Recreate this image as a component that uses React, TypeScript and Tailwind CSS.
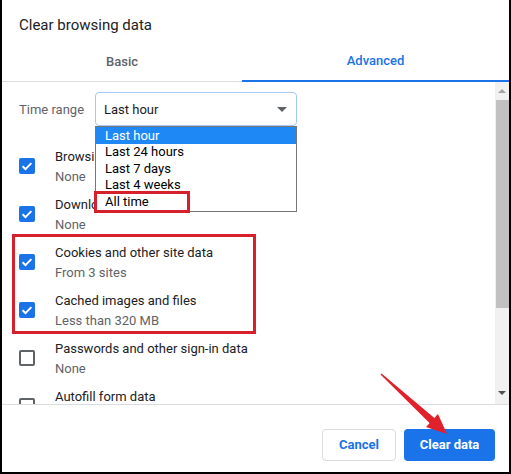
import React from "react";

function Checked() {
  return (
    <div className="w-[16px] h-[16px] rounded-[2px] bg-[#1a73e8] flex items-center justify-center shrink-0">
      <svg width="16" height="16" viewBox="0 0 16 16">
        <path d="M3.6 8.2l2.9 2.9 5.9-6" fill="none" stroke="white" strokeWidth="2" />
      </svg>
    </div>
  );
}

function Unchecked() {
  return <div className="w-[16px] h-[16px] rounded-[2px] border-2 border-[#5f6368] shrink-0" />;
}

function Row({ checked, title, sub }: { checked: boolean; title: string; sub: string }) {
  return (
    <div className="h-[48px] flex items-center shrink-0">
      {checked ? <Checked /> : <Unchecked />}
      <div className="ml-[20px] pt-[1px] flex flex-col">
        <div className="text-[13px] leading-[20px] text-[#202124] whitespace-nowrap">{title}</div>
        <div className="text-[13px] leading-[20px] text-[#5f6368] whitespace-nowrap">{sub}</div>
      </div>
    </div>
  );
}

export default function App() {
  const options = ["Last hour", "Last 24 hours", "Last 7 days", "Last 4 weeks", "All time"];
  return (
    <div className="relative w-[511px] h-[474px] bg-white border-l-2 border-r-2 border-b-2 border-black font-['Roboto',sans-serif] flex flex-col overflow-hidden">
      <div className="pl-[17px] pt-[15px] h-[40px] shrink-0 text-[15px] leading-[20px] text-[#202124]">
        Clear browsing data
      </div>
      <div className="flex h-[42px] shrink-0 border-b border-[#dadce0]">
        <div className="w-[240px] pt-[2px] flex items-center justify-center text-[13px] font-medium text-[#5f6368]">Basic</div>
        <div className="flex-1 pt-[2px] flex items-center justify-center text-[13px] font-medium text-[#1a73e8] border-b-2 border-[#1a73e8] -mb-px">
          Advanced
        </div>
      </div>
      <div className="flex h-[323px] shrink-0 border-b border-[#dadce0]">
        <div className="flex-1 overflow-hidden pt-[10px] pl-[17px] flex flex-col">
          <div className="flex items-center h-[34px] shrink-0 pt-[1px]">
            <div className="w-[76px] text-[13px] text-[#5f6368]">Time range</div>
            <div className="w-[202px] h-[34px] -mt-[1px] border border-[#a8c7fa] rounded-[4px] flex items-center justify-between pl-[8px] pr-[9px] pt-[1px]">
              <span className="text-[13px] text-[#202124]">Last hour</span>
              <svg width="10" height="5" viewBox="0 0 10 5">
                <path d="M0 0h10L5 5z" fill="#5f6368" />
              </svg>
            </div>
          </div>
          <div className="h-[16px] shrink-0" />
          <Row checked title="Browsing history" sub="None" />
          <Row checked title="Download history" sub="None" />
          <Row checked title="Cookies and other site data" sub="From 3 sites" />
          <Row checked title="Cached images and files" sub="Less than 320 MB" />
          <Row checked={false} title="Passwords and other sign-in data" sub="None" />
          <Row checked={false} title="Autofill form data" sub="None" />
        </div>
        <div className="w-[14px] bg-[#f1f1f1] flex flex-col items-stretch">
          <div className="h-[18px] flex items-center justify-center shrink-0">
            <svg width="8" height="4" viewBox="0 0 8 4">
              <path d="M0 4h8L4 0z" fill="#a3a3a3" />
            </svg>
          </div>
          <div className="h-[208px] ml-[1px] bg-[#c1c1c1] shrink-0" />
          <div className="flex-1" />
          <div className="h-[18px] flex items-center justify-center shrink-0 pb-[4px]">
            <svg width="8" height="4" viewBox="0 0 8 4">
              <path d="M0 0h8L4 4z" fill="#505050" />
            </svg>
          </div>
        </div>
      </div>
      <div className="flex-1 flex justify-end items-start pt-[24px] pr-[14px] gap-[8px]">
        <div className="w-[74px] h-[32px] border border-[#dadce0] rounded-[4px] flex items-center justify-center text-[13px] font-bold text-[#1a73e8]">
          Cancel
        </div>
        <div className="w-[91px] h-[32px] bg-[#1a73e8] rounded-[4px] flex items-center justify-center text-[13px] font-bold text-white">
          Clear data
        </div>
      </div>

      {/* dropdown list */}
      <div className="absolute left-[93px] top-[126px] w-[202px] h-[86px] bg-white border border-[#767676] flex flex-col">
        {options.map((o, i) => (
          <div
            key={o}
            className={
              i === 0
                ? "h-[16.5px] shrink-0 pl-[9px] pt-[1px] flex items-center text-[13px] leading-[16px] bg-[#1e88f5] text-white"
                : "h-[16.5px] shrink-0 pl-[9px] pt-[1px] flex items-center text-[13px] leading-[16px] text-black"
            }
          >
            {o}
          </div>
        ))}
      </div>

      {/* red highlight boxes */}
      <div className="absolute left-[92px] top-[191px] w-[96px] h-[22px] border-[3px] border-[#d6202c]" />
      <div className="absolute left-[10px] top-[234px] w-[244px] h-[100px] border-[3px] border-[#d6202c]" />

      {/* red arrow */}
      <svg className="absolute left-[-2px] top-0 pointer-events-none" width="511" height="474" viewBox="0 0 511 474">
        <path d="M380.5 374.5 L381.5 373.5 L435 418.5 L430.5 424 Z" fill="#e0202a" />
        <path d="M447 434 L426 427 L438 414 Z" fill="#e0202a" />
      </svg>
    </div>
  );
}
